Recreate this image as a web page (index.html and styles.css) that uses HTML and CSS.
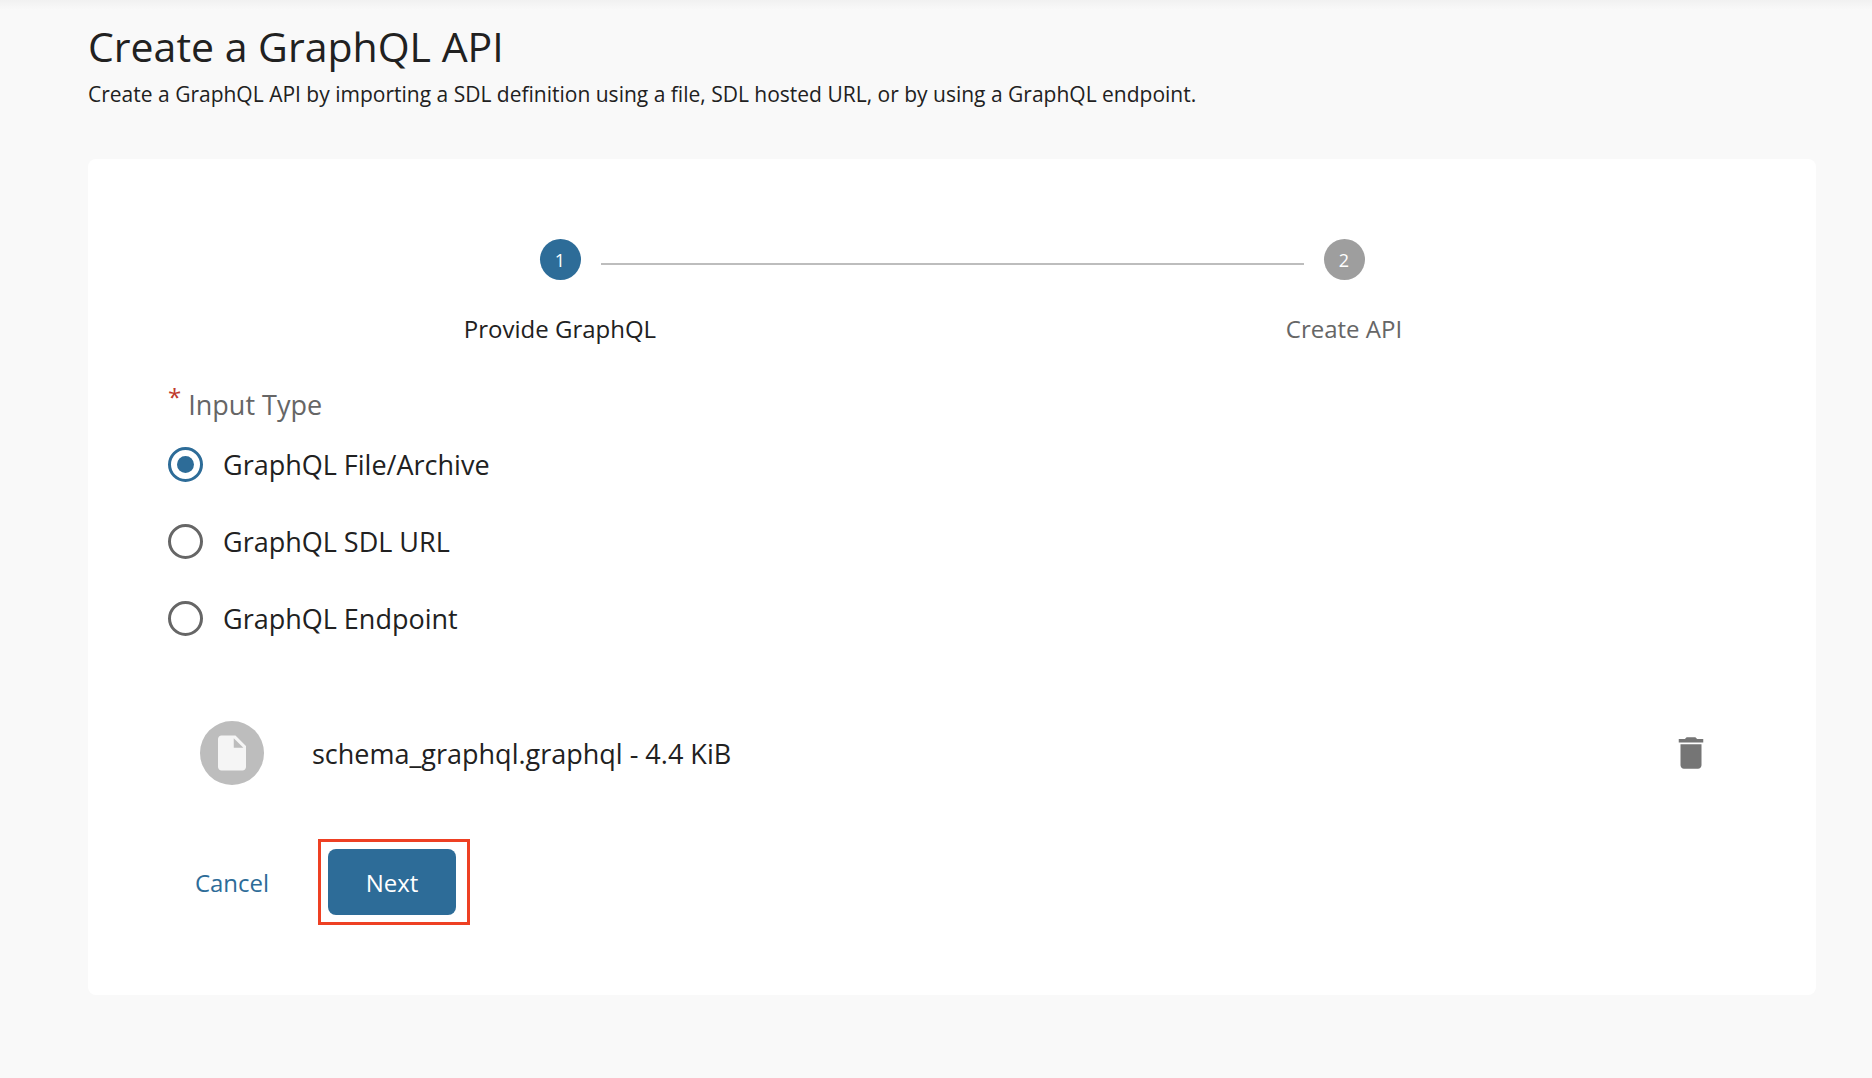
FILE: index.html
```html
<!DOCTYPE html>
<html lang="en">
<head>
  <meta charset="utf-8">
  <meta name="viewport" content="width=device-width, initial-scale=1">
  <title>Create a GraphQL API</title>
  <link rel="stylesheet" href="styles.css">
</head>
<body>
  <main class="page">
    <header class="page-header">
      <h1 class="page-title">Create a GraphQL API</h1>
      <p class="page-subtitle">Create a GraphQL API by importing a SDL definition using a file, SDL hosted URL, or by using a GraphQL endpoint.</p>
    </header>

    <form class="card">
      <ol class="stepper">
        <li class="step step-active" aria-current="step">
          <div class="step-head">
            <span class="step-spacer"></span>
            <span class="step-number">1</span>
            <span class="step-line"></span>
          </div>
          <span class="step-label">Provide GraphQL</span>
        </li>
        <li class="step">
          <div class="step-head">
            <span class="step-line"></span>
            <span class="step-number">2</span>
            <span class="step-spacer"></span>
          </div>
          <span class="step-label">Create API</span>
        </li>
      </ol>

      <fieldset class="input-type">
        <legend class="input-type-legend"><span class="required">*</span>Input Type</legend>
        <label class="option"><input class="option-radio" type="radio" name="input-type" checked>GraphQL File/Archive</label>
        <label class="option"><input class="option-radio" type="radio" name="input-type">GraphQL SDL URL</label>
        <label class="option"><input class="option-radio" type="radio" name="input-type">GraphQL Endpoint</label>
      </fieldset>

      <div class="file">
        <span class="file-avatar">
          <svg class="icon" viewBox="0 0 24 24" aria-hidden="true"><path d="M6 2c-1.100 0-2 .9-2 2v16c0 1.100.9 2 2 2h12c1.100 0 2-.9 2-2V8l-6-6H6zm7 7V3.500L18.500 9H13z"/></svg>
        </span>
        <span class="file-name">schema_graphql.graphql - 4.4 KiB</span>
        <button class="file-delete" type="button" aria-label="Delete file">
          <svg class="icon" viewBox="0 0 24 24" aria-hidden="true"><path d="M6 19c0 1.100.9 2 2 2h8c1.100 0 2-.9 2-2V7H6v12zM19 4h-3.500l-1-1h-5l-1 1H5v2h14V4z"/></svg>
        </button>
      </div>

      <div class="actions">
        <button class="button button-text" type="button">Cancel</button>
        <div class="highlight">
          <button class="button button-primary" type="submit">Next</button>
        </div>
      </div>
    </form>
  </main>
</body>
</html>
```

FILE: styles.css
```css
* {
  box-sizing: border-box;
}

body {
  margin: 0;
  min-height: 100vh;
  background: linear-gradient(#f1f1f1, #f9f9f9 10px) #f9f9f9;
  color: #212121;
  font-family: "Open Sans", "Noto Sans", sans-serif;
}

.page {
  padding: 16px 56px 80px 88px;
}

.page-title {
  margin: 0;
  font-size: 41px;
  line-height: 60px;
  font-weight: 400;
}

.page-subtitle {
  margin: 4px 0 0;
  font-size: 21px;
  line-height: 28px;
}

.card {
  margin-top: 51px;
  padding: 80px 80px 70px;
  border-radius: 8px;
  background: #fff;
}

.stepper {
  display: grid;
  grid-template-columns: 1fr 1fr;
  margin: 0;
  padding: 0;
  list-style: none;
}

.step {
  display: flex;
  flex-direction: column;
  gap: 32px;
  color: #666;
  text-align: center;
}

.step-active {
  color: #212121;
}

.step-head {
  display: flex;
  align-items: center;
  gap: 20px;
}

.step-spacer {
  flex: 1;
}

.step-line {
  flex: 1;
  height: 2px;
  margin-top: 8px;
  background: #bdbdbd;
}

.step-number {
  width: 41px;
  height: 41px;
  border-radius: 50%;
  background: #9e9e9e;
  color: #fff;
  font-size: 18px;
  line-height: 42px;
}

.step-active .step-number {
  background: #2d6c98;
}

.step-label {
  font-size: 24px;
  line-height: 34px;
}

.input-type {
  margin: 38px 0 0;
  padding: 0;
  border: 0;
}

.input-type-legend {
  display: flex;
  gap: 7px;
  padding: 0;
  color: #666;
  font-size: 27px;
  line-height: 42px;
}

.required {
  color: #c0392b;
  font-size: 24px;
  line-height: 26px;
}

.option {
  display: flex;
  align-items: center;
  gap: 20px;
  height: 77px;
  font-size: 27px;
}

.option-radio {
  appearance: none;
  display: grid;
  place-items: center;
  width: 35px;
  height: 35px;
  margin: 0;
  border: 3px solid #666;
  border-radius: 50%;
}

.option-radio:checked {
  border-color: #2d6c98;
}

.option-radio:checked::before {
  content: "";
  width: 17px;
  height: 17px;
  border-radius: 50%;
  background: #2d6c98;
}

.file {
  display: flex;
  align-items: center;
  gap: 48px;
  margin-top: 64px;
  padding: 0 24px 0 32px;
}

.file-avatar {
  display: grid;
  place-items: center;
  width: 64px;
  height: 64px;
  border-radius: 50%;
  background: #bdbdbd;
  color: #f5f5f5;
}

.file-name {
  flex: 1;
  font-size: 27px;
}

.file-delete {
  display: grid;
  padding: 0;
  border: 0;
  background: none;
  color: #757575;
}

.icon {
  width: 42px;
  height: 42px;
  fill: currentColor;
}

.actions {
  display: flex;
  align-items: center;
  gap: 22px;
  margin-top: 54px;
}

.button {
  width: 128px;
  height: 66px;
  padding: 0;
  border: 0;
  border-radius: 8px;
  font: inherit;
  font-size: 24px;
}

.button-text {
  background: none;
  color: #2d6c98;
}

.button-primary {
  display: block;
  background: #2d6c98;
  color: #fff;
}

.highlight {
  padding: 7px 11px 7px 7px;
  border: 3px solid #ee4023;
}
```
